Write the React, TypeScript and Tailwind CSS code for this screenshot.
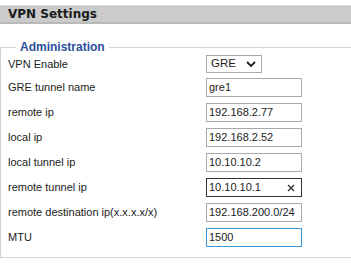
import React from "react";

const rows = [
  { label: "GRE tunnel name", value: "gre1", state: "" },
  { label: "remote ip", value: "192.168.2.77", state: "" },
  { label: "local ip", value: "192.168.2.52", state: "" },
  { label: "local tunnel ip", value: "10.10.10.2", state: "" },
  { label: "remote tunnel ip", value: "10.10.10.1", state: "hover" },
  { label: "remote destination ip(x.x.x.x/x)", value: "192.168.200.0/24", state: "" },
  { label: "MTU", value: "1500", state: "focus" },
];

const App = () => {
  return (
    <div className="w-[351px] h-[268px] overflow-hidden bg-white pt-[5px] font-['Liberation_Sans',Arial,sans-serif] text-[#222]">
      {/* Title bar */}
      <div className="h-[19px] bg-[#cbcbcb] border-t border-t-[#dcdcdc] border-b-2 border-b-[#b9b9b9] pl-2 flex items-center font-['DejaVu_Sans',Verdana,sans-serif] font-bold text-[12px] text-[#1a1a1a]">
        VPN Settings
      </div>

      {/* Administration group */}
      <fieldset className="mt-[16px] w-[420px] border-t border-l border-b border-[#d4d4d4] pl-[7px] pb-[10px]">
        <legend className="ml-[8px] px-[4px] text-[12px] leading-[14px] font-bold text-[#2c4f9e]">
          Administration
        </legend>

        <div className="flex flex-col gap-[6px]">
          <div className="mt-[1px] h-[17px] grid grid-cols-[198px_auto] items-center text-[11px]">
            <span>VPN Enable</span>
            <div className="relative w-[56px] h-[18px] border border-[#a9a9a9] bg-white flex items-center pl-[4px] text-[11.5px]">
              GRE
              <svg className="absolute right-[5px] top-[5px]" width="10" height="7" viewBox="0 0 10 7">
                <path d="M1 1 L5 5 L9 1" fill="none" stroke="#222" strokeWidth="1.8" />
              </svg>
            </div>
          </div>

          {rows.map((r) => (
            <div key={r.label} className="h-[19px] grid grid-cols-[198px_auto] items-center text-[11px]">
              <span>{r.label}</span>
              <div
                className={
                  "relative w-[96px] h-[19px] bg-white flex items-center pl-[2px] text-[11px] whitespace-nowrap overflow-hidden " +
                  (r.state === "hover"
                    ? "border border-[#333333]"
                    : r.state === "focus"
                    ? "border border-[#3c9ad8]"
                    : "border border-[#a9a9a9]")
                }
              >
                {r.value}
                {r.state === "hover" && (
                  <svg className="absolute right-[6px] top-[5px]" width="8" height="8" viewBox="0 0 8 8">
                    <path d="M1 1 L7 7 M7 1 L1 7" stroke="#333" strokeWidth="1.4" />
                  </svg>
                )}
              </div>
            </div>
          ))}
        </div>
      </fieldset>
    </div>
  );
};

export default App;
